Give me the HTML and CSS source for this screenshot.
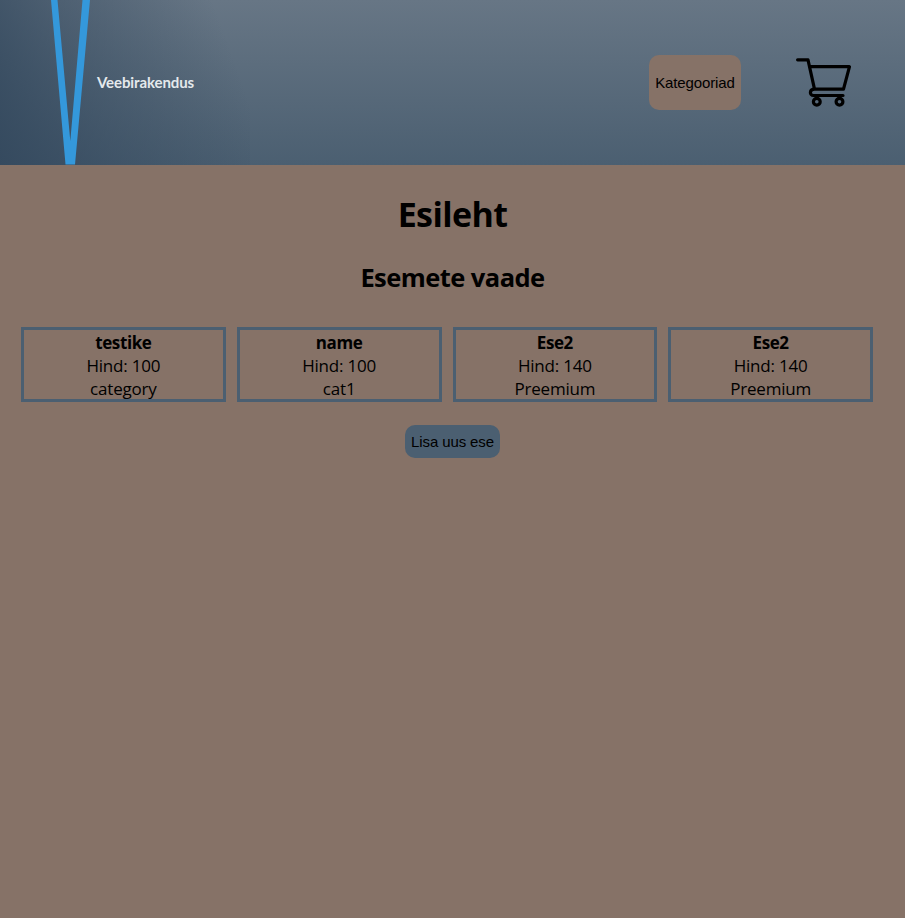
FILE: index.html
```html
<!DOCTYPE html>
<html lang="et">
<head>
<meta charset="utf-8">
<title>Veebirakendus</title>
<link rel="stylesheet" href="styles.css">
</head>
<body>
<header class="header">
  <div class="brand">
    <svg class="brand-mark" width="48" height="165" viewBox="0 0 48 165" fill="#3498db"><path d="M2 0h6.500L21.300 141L33.500 0H41L26 164.500H16.500z"/></svg>
    <span class="brand-name">Veebirakendus</span>
  </div>
  <nav class="nav">
    <button class="button categories">Kategooriad</button>
    <a class="cart" aria-label="Ostukorv">
      <svg width="56" height="50" viewBox="0 0 56 50" fill="none" stroke="#000" stroke-width="3.200" stroke-linecap="round" stroke-linejoin="round"><path d="M1.600 1.800H12L18.500 31.200H47.500L53.500 8.700H14M18.500 31.200C13.200 31.200 13.200 37.500 17.500 37.500H47"/><circle cx="20.800" cy="43.700" r="3.400"/><circle cx="43.500" cy="43.700" r="3.400"/></svg>
    </a>
  </nav>
</header>
<main class="main">
  <h1 class="title">Esileht</h1>
  <h2 class="subtitle">Esemete vaade</h2>
  <section class="items">
    <article class="item"><strong>testike</strong><span>Hind: 100</span><span>category</span></article>
    <article class="item"><strong>name</strong><span>Hind: 100</span><span>cat1</span></article>
    <article class="item"><strong>Ese2</strong><span>Hind: 140</span><span>Preemium</span></article>
    <article class="item"><strong>Ese2</strong><span>Hind: 140</span><span>Preemium</span></article>
  </section>
  <button class="button add">Lisa uus ese</button>
</main>
</body>
</html>
```
FILE: styles.css
```css
* { box-sizing: border-box; }
body {
  margin: 0;
  min-height: 100vh;
  background: #867267;
  color: #000;
  font-family: "Segoe UI", "Open Sans", "Noto Sans", sans-serif;
}
.header {
  height: 165px;
  display: flex;
  justify-content: space-between;
  background: linear-gradient(#677685, #4b5f71);
}
.brand {
  width: 250px;
  display: flex;
  align-items: center;
  padding-left: 49px;
  background: linear-gradient(70deg, rgba(52, 73, 94, .95) 0%, rgba(52, 73, 94, .5) 38%, rgba(52, 73, 94, 0) 88%);
}
.brand-mark { flex: none; }
.brand-name {
  padding-bottom: 2px;
  color: #e4e9ec;
  font: bold 15px/20px Lato, sans-serif;
  letter-spacing: -.1px;
}
.nav {
  display: flex;
  align-items: center;
  gap: 55px;
  padding-right: 53px;
}
.button {
  border: 0;
  padding: 0;
  border-radius: 10px;
  color: #000;
  font: 15px/17px "Liberation Sans", sans-serif;
  letter-spacing: -.12px;
}
.categories { width: 92px; height: 55px; background: #867267; }
.cart { display: flex; }
.main {
  display: flex;
  flex-direction: column;
  align-items: center;
  padding: 25px 32px 0 21px;
}
.title, .subtitle { margin: 0 -11px 0 0; font-weight: 700; }
.title { font-size: 34px; line-height: 48px; letter-spacing: -.6px; }
.subtitle { font-size: 25.500px; line-height: 36px; margin-top: 21px; letter-spacing: -.55px; }
.items {
  width: 100%;
  display: grid;
  grid-template-columns: repeat(4, 1fr);
  gap: 11px;
  margin-top: 32px;
}
.item {
  height: 75px;
  border: 3px solid #4b5f71;
  display: flex;
  flex-direction: column;
  align-items: center;
  font-size: 17px;
  line-height: 23px;
  letter-spacing: -.2px;
}
.item strong { padding-top: 1px; letter-spacing: -.4px; }
.add {
  width: 95px;
  height: 33px;
  margin: 23px -11px 0 0;
  background: #4b5f71;
}
```
